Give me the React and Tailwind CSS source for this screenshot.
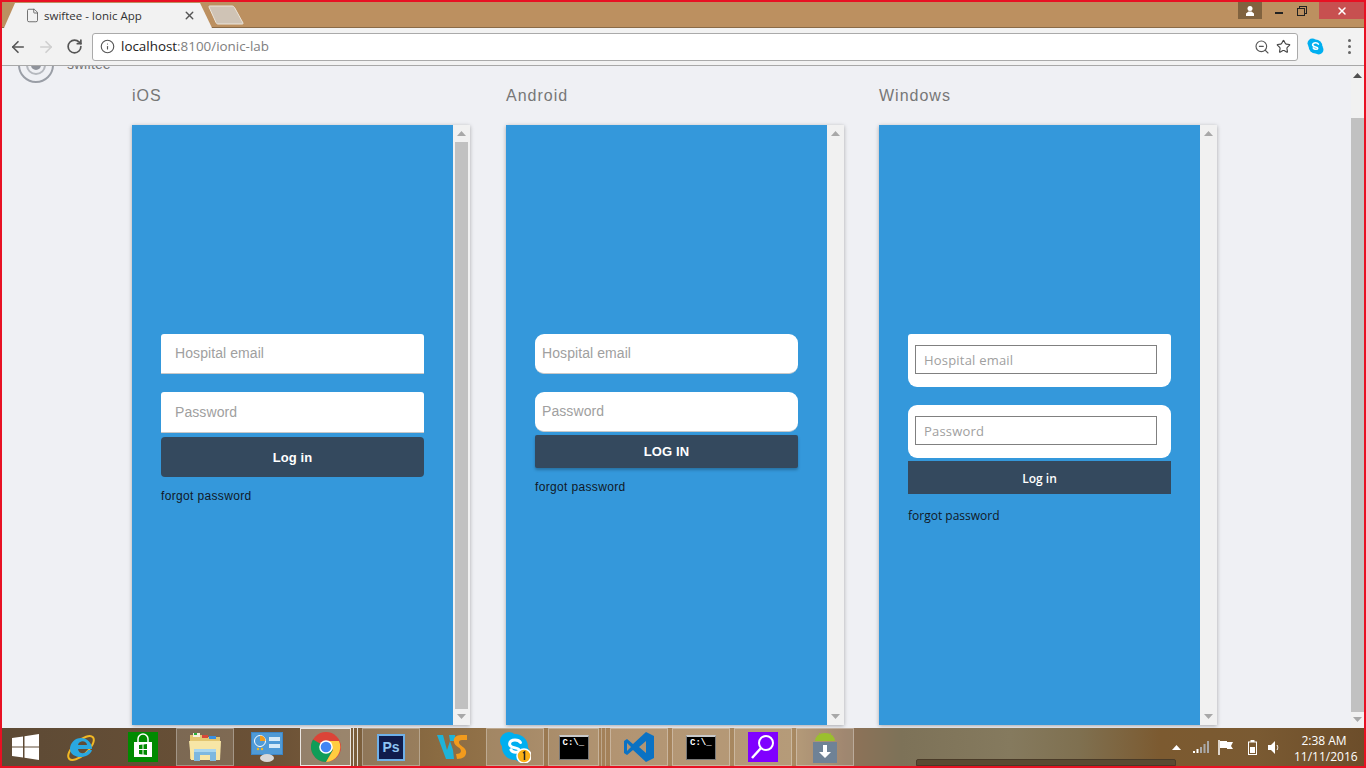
import { ArrowLeft, ArrowRight, RotateCw, Info, ZoomOut, Star, File, X } from "lucide-react";

const chromeFont = "font-['Open_Sans','Noto_Sans',sans-serif]";

function ArrowUp({ className }) {
  return (
    <svg width="9" height="5" viewBox="0 0 9 5" className={className}>
      <path d="M4.5 0L9 5H0z" fill="currentColor" />
    </svg>
  );
}

function ArrowDown({ className }) {
  return (
    <svg width="9" height="5" viewBox="0 0 9 5" className={className}>
      <path d="M0 0h9L4.5 5z" fill="currentColor" />
    </svg>
  );
}

function SkypeIcon({ size = 17, badge = false }) {
  return (
    <svg width={size} height={size} viewBox="0 0 32 32">
      <circle cx="10" cy="10" r="9" fill="#00aff0" />
      <circle cx="22" cy="22" r="9" fill="#00aff0" />
      <circle cx="16" cy="16" r="13" fill="#00aff0" />
      <path d="M21.5 11.5c-1-1.6-3-2.5-5.5-2.5-3.2 0-5.4 1.6-5.4 3.9 0 5 9.6 3 9.6 6.4 0 1.200-1.500 2-3.700 2-2.300 0-3.700-1-4.600-2.500" fill="none" stroke="#fff" strokeWidth="3" strokeLinecap="round" />
      {badge && (
        <>
          <circle cx="25" cy="25" r="7" fill="#fbb017" stroke="#fff" strokeWidth="1.500" />
          <path d="M24 22l1.500-1v8" fill="none" stroke="#222" strokeWidth="1.500" />
        </>
      )}
    </svg>
  );
}

function WinLogo() {
  return (
    <svg width="27" height="26" viewBox="0 0 27 26">
      <path d="M0 4l11-1.600v10H0zM12.500 2.200L27 0v12.400H12.500zM0 13.600h11v10L0 22zM12.500 13.600H27V26l-14.500-2.200z" fill="#fff" />
    </svg>
  );
}

function IeLogo() {
  return (
    <svg width="30" height="31" viewBox="0 0 30 31">
      <ellipse cx="15" cy="16" rx="16" ry="7" transform="rotate(-42 15 16)" fill="none" stroke="#f2b824" strokeWidth="2" />
      <path d="M4 17a11 11 0 1 1 22 0H12c.5 5 7 6 10 1h4c-3 10-22 9-22-1zM12 13h9c-.5-5-8-5-9 0z" fill="#2aa8e0" />
    </svg>
  );
}

function StoreLogo() {
  return (
    <svg width="30" height="30" viewBox="0 0 30 30">
      <rect width="30" height="30" fill="#008a00" />
      <path d="M10 10V7a5 5 0 0 1 10 0v3" fill="none" stroke="#fff" strokeWidth="1.500" />
      <rect x="6" y="10" width="18" height="15" fill="#fff" />
      <path d="M11 13l3.500-.5V17H11zM15.500 12.400L19 12v5h-3.500zM11 18h3.500v4.500L11 22zM15.500 18H19v5l-3.500-.5z" fill="#008a00" />
    </svg>
  );
}

function ExplorerLogo() {
  return (
    <svg width="32" height="30" viewBox="0 0 32 30">
      <path d="M1 3h12l2 2h16v22H1z" fill="#e3c56f" />
      <rect x="4" y="1" width="7" height="4" fill="#f4f0dc" />
      <rect x="5" y="1" width="3" height="2" fill="#27b33c" />
      <rect x="13" y="3" width="6" height="3" fill="#d8473a" />
      <rect x="20" y="4" width="7" height="3" fill="#3a8fe0" />
      <path d="M0 9h32l-1 19H2z" fill="#f7e6a6" />
      <path d="M5 29V18h22v11h-6v-6H11v6z" fill="#7db8e0" />
      <rect x="5" y="17" width="22" height="3" fill="#a8d6f0" />
    </svg>
  );
}

function PanelLogo() {
  return (
    <svg width="32" height="30" viewBox="0 0 32 30">
      <rect x="0" y="0" width="32" height="23" fill="#3d86c6" />
      <rect x="1" y="1" width="30" height="21" fill="#4f9ad6" />
      <circle cx="9" cy="9" r="5.500" fill="none" stroke="#fff" strokeWidth="1" />
      <path d="M9 9V3.500A5.500 5.500 0 0 1 14.500 9z" fill="#f29b1d" />
      <rect x="18" y="5" width="11" height="4" fill="#d6eaf8" />
      <rect x="18" y="12" width="11" height="4" fill="#d6eaf8" />
      <circle cx="7" cy="17" r="1.200" fill="#f2b824" />
      <circle cx="11" cy="17" r="1.200" fill="#f2b824" />
      <ellipse cx="16" cy="26" rx="7" ry="4" fill="#d8d8d8" />
    </svg>
  );
}

function ChromeLogo() {
  return (
    <svg width="30" height="30" viewBox="0 0 30 30">
      <circle cx="15" cy="15" r="15" fill="#db4437" />
      <path d="M15 15L2 7.500A15 15 0 0 0 15 30l7.500-13z" fill="#0f9d58" />
      <path d="M15 9h13a15 15 0 0 1-13 21l7-12z" fill="#ffcd40" />
      <circle cx="15" cy="15" r="6.800" fill="#fff" />
      <circle cx="15" cy="15" r="5.300" fill="#4285f4" />
    </svg>
  );
}

function PsLogo() {
  return (
    <div className="w-[28px] h-[27px] bg-[#101c4c] border-2 border-[#6fb0e8] flex items-center justify-center font-['Liberation_Sans',sans-serif] font-bold text-[14px] leading-none text-[#8ec4f2]">
      Ps
    </div>
  );
}

function WsLogo() {
  return (
    <svg width="32" height="28" viewBox="0 0 32 28">
      <path d="M0 2h6l4 15 3-9 3 9 1 9H9z" fill="#1fb3d8" />
      <path d="M13 8l-1-6h6l1 6z" fill="#1fb3d8" />
      <path d="M20 26c6 0 10-3 9-8-1-4-6-5-7-8-.5-2 1-3 3-3h5V2h-6c-5 0-8 3-7 7 1 5 7 5 7 9 0 2-2 3-5 3z" fill="#f29b1d" />
    </svg>
  );
}

function CmdLogo() {
  return (
    <div className="w-[30px] h-[25px] bg-black border-t-2 border-t-[#c9c9c9] border-x border-b border-[#777] pl-[3px] pt-[2px] font-['Liberation_Mono',monospace] font-bold text-[9px] leading-none text-white whitespace-nowrap">
      C:\_
    </div>
  );
}

function VsLogo() {
  return (
    <svg width="32" height="32" viewBox="0 0 32 32">
      <path d="M23 1l8 4v22l-8 4-13-12-6 5-3-2V10l3-2 6 5zM23 10l-7 6 7 6zM4 12v8l4-4z" fill="#0a72c4" />
    </svg>
  );
}

function SearchLogo() {
  return (
    <svg width="30" height="30" viewBox="0 0 30 30">
      <rect width="30" height="30" fill="#8000ff" />
      <circle cx="18" cy="11" r="7" fill="none" stroke="#fff" strokeWidth="2" />
      <path d="M13 16L4 26" stroke="#fff" strokeWidth="2.500" />
    </svg>
  );
}

function AndroidLogo() {
  return (
    <svg width="24" height="32" viewBox="0 0 24 32">
      <path d="M2 10a10 8 0 0 1 20 0z" fill="#9bbf2e" />
      <path d="M6 2l2 3M18 2l-2 3" stroke="#9bbf2e" />
      <rect y="11" width="24" height="21" fill="#6f8296" />
      <path d="M10 14h4v7h4l-6 6-6-6h4z" fill="#fff" />
    </svg>
  );
}

// pitch of the pinned buttons is 62px, some are open (lit) and some are stacked
const taskItems = [
  { key: "ie", icon: <IeLogo /> },
  { key: "store", icon: <StoreLogo /> },
  { key: "explorer", icon: <ExplorerLogo />, open: true },
  { key: "panel", icon: <PanelLogo /> },
  { key: "chrome", icon: <ChromeLogo />, active: true, stacked: true },
  { key: "ps", icon: <PsLogo />, open: true },
  { key: "ws", icon: <WsLogo /> },
  { key: "skype", icon: <SkypeIcon size={32} badge />, open: true },
  { key: "cmd1", icon: <CmdLogo />, open: true, stacked: true },
  { key: "vs", icon: <VsLogo />, open: true },
  { key: "cmd2", icon: <CmdLogo />, open: true },
  { key: "search", icon: <SearchLogo />, open: true },
  { key: "android", icon: <AndroidLogo />, open: true },
];

function TaskButton({ icon, open, active, stacked }) {
  const lit = active
    ? "bg-white/25 border-white/80"
    : open
      ? "bg-white/15 border-white/30"
      : "border-transparent";
  return (
    <div className="flex shrink-0 mx-[2px] h-full">
      <div className={`${stacked ? "w-[51px]" : "w-[58px]"} h-full border flex items-center justify-center ${lit}`}>
        {icon}
      </div>
      {stacked && (
        <>
          <div className={`w-[3px] h-full border-r ${active ? "border-white/80" : "border-white/30"}`} />
          <div className={`w-[4px] h-full border-r ${active ? "border-white/80" : "border-white/30"}`} />
        </>
      )}
    </div>
  );
}

function Taskbar() {
  return (
    <div className="relative shrink-0 h-[39px] flex items-stretch overflow-hidden bg-[linear-gradient(90deg,#5d4a35_0%,#6b5136_20%,#8a6b42_32%,#a5825a_45%,#a98a62_58%,#8f7258_62%,#7d7258_66%,#857a5e_74%,#7f7050_79%,#7c5a30_85%,#7a5a32_92%,#6c4d2a_100%)] border-b border-[#222]">
      <div className="w-[50px] shrink-0 flex items-center justify-center pl-[1px]">
        <WinLogo />
      </div>
      {taskItems.map(({ key, ...item }) => (
        <TaskButton key={key} {...item} />
      ))}
      <div className="flex-1" />
      <div className="flex items-center pr-[14px] text-white">
        <svg width="9" height="5" viewBox="0 0 9 5"><path d="M4.500 0L9 5H0z" fill="#fff" /></svg>
        <svg width="16" height="12" viewBox="0 0 16 12" className="ml-[12px]">
          <path d="M0 10h2v2H0zM3.500 8h2v4h-2z" fill="#fff" />
          <path d="M7 6h2v6H7zM10.500 3h2v9h-2zM14 0h2v12h-2z" fill="#a9a9a9" />
        </svg>
        <svg width="16" height="15" viewBox="0 0 16 15" className="ml-[9px]">
          <path d="M1 0v15" stroke="#fff" strokeWidth="1.500" />
          <path d="M2 1h7v1h6l-2 4 2 3H9V8H2z" fill="#fff" />
        </svg>
        <svg width="9" height="15" viewBox="0 0 9 15" className="ml-[14px]">
          <rect x=".5" y="2" width="8" height="12.500" fill="none" stroke="#fff" />
          <rect x="2.500" y="0" width="4" height="2" fill="#fff" />
          <rect x="2" y="7" width="5" height="6" fill="#fff" />
        </svg>
        <svg width="12" height="13" viewBox="0 0 12 13" className="ml-[11px]">
          <path d="M0 4h3l4-4v13L3 9H0z" fill="#fff" />
          <path d="M9 4c1 1.500 1 3.500 0 5" fill="none" stroke="#fff" />
        </svg>
        <div className={`${chromeFont} ml-[14px] w-[60px] text-center text-[12px] leading-[16px] text-white mt-[3px] mr-[-2px]`}>
          <div>2:38 AM</div>
          <div>11/11/2016</div>
        </div>
      </div>
      <div className="absolute left-[916px] bottom-0 w-[260px] h-[7px] rounded-t-[2px] bg-[#5a4a32] border border-[#4a3b28]" />
    </div>
  );
}

function TitleBar() {
  return (
    <div className="relative shrink-0 h-[28px] bg-[#bc9060] flex justify-end items-start pt-[2px] pr-[2px] border-b border-[#8a6a46]">
      <svg width="250" height="28" viewBox="0 0 250 28" className="absolute left-0 top-0">
        <path d="M4 28L15 3h185l12 25z" fill="#f2f2f2" />
        <path d="M210 6h22c1 0 2 .5 2.500 1.500L243 23c.3.600 0 1-1 1h-24c-1 0-1.500-.5-2-1.500L209 7c-.3-.5 0-1 1-1z" fill="#cfc3b5" stroke="#ece5da" />
      </svg>
      <div className={`${chromeFont} absolute left-[25px] top-[8px] w-[172px] flex items-center text-[11.5px] leading-[14px] text-[#333]`}>
        <File size={15} strokeWidth={1.3} className="text-[#555]" />
        <span className="ml-[4px] flex-1">swiftee - Ionic App</span>
        <X size={13} strokeWidth={2.5} className="text-[#555] mr-[1px]" />
      </div>
      <div className="w-[24px] h-[17px] bg-[#80623f] flex items-center justify-center">
        <svg width="10" height="10" viewBox="0 0 10 10"><circle cx="5" cy="2.500" r="2.500" fill="#fff" /><path d="M1 10V7.500L3.500 5.500h3L9 7.500V10z" fill="#fff" /></svg>
      </div>
      <div className="w-[57px] h-[17px] flex items-center justify-between px-[13px]">
        <div className="w-[8px] h-[2px] bg-[#222] mt-[5px]" />
        <svg width="10" height="10" viewBox="0 0 10 10" className="shrink-0 -mr-[1px]">
          <rect x="2.500" y=".5" width="7" height="7" fill="none" stroke="#222" />
          <rect x=".5" y="2.500" width="7" height="7" fill="#bc9060" stroke="#222" />
        </svg>
      </div>
      <div className="w-[45px] h-[17px] bg-[#c75050] flex items-center justify-center">
        <X size={12} strokeWidth={3} className="text-white" />
      </div>
    </div>
  );
}

function Toolbar() {
  return (
    <div className="shrink-0 h-[38px] bg-[#f2f2f2] border-b border-[#a8a8a8] flex items-center pl-[9px] pr-[10px]">
      <ArrowLeft size={18} strokeWidth={2.2} className="text-[#555]" />
      <ArrowRight size={18} strokeWidth={2.2} className="ml-[10px] text-[#cfcfcf]" />
      <RotateCw size={17} strokeWidth={2.4} className="ml-[11px] text-[#555]" />
      <div className="ml-[9px] w-[1206px] h-[28px] bg-white border border-[#aaa] rounded-[3px] flex items-center pl-[7px] pr-[6px]">
        <Info size={15} strokeWidth={1.8} className="text-[#555]" />
        <span className={`${chromeFont} ml-[6px] text-[13.4px] text-[#222] flex-1`}>
          localhost<span className="text-[#808080]">:8100/ionic-lab</span>
        </span>
        <ZoomOut size={16} strokeWidth={1.7} className="text-[#555]" />
        <Star size={15} strokeWidth={1.8} className="ml-[6px] text-[#444]" />
      </div>
      <div className="ml-[9px]">
        <SkypeIcon />
      </div>
      <div className="ml-[24px] flex flex-col gap-[3px]">
        <div className="w-[3px] h-[3px] rounded-full bg-[#666]" />
        <div className="w-[3px] h-[3px] rounded-full bg-[#666]" />
        <div className="w-[3px] h-[3px] rounded-full bg-[#666]" />
      </div>
    </div>
  );
}

function PhoneScrollbar({ thumb }) {
  return (
    <div className="w-[17px] h-full bg-[#f1f1f1] flex flex-col items-center">
      <ArrowUp className="mt-[6px] text-[#a8a8a8]" />
      <div className="flex-1 w-[13px] mt-[6px] mb-[5px]">
        {thumb && <div className="w-full h-full bg-[#c1c1c1]" />}
      </div>
      <ArrowDown className="mb-[6px] text-[#a8a8a8]" />
    </div>
  );
}

function Phone({ title, thumb, className = "", children }) {
  return (
    <div className={`w-[338px] shrink-0 ${className}`}>
      <h2 className="h-[20px] mt-[1px] mb-[19px] font-['Liberation_Sans',sans-serif] text-[16px] leading-[20px] tracking-[1px] text-[#777]">
        {title}
      </h2>
      <div className="h-[600px] flex shadow-[0_1px_4px_rgba(0,0,0,0.3)]">
        <div className="w-[321px] h-full bg-[#3498db] px-[29px] pt-[209px]">{children}</div>
        <PhoneScrollbar thumb={thumb} />
      </div>
    </div>
  );
}

function IosForm() {
  return (
    <div className="font-['Liberation_Sans',sans-serif]">
      <div className="h-[40px] bg-white rounded-t-[3px] border-b border-[#c8c8c8] flex items-center">
        <input placeholder="Hospital email" className="w-full pl-[14px] text-[14px] tracking-[0.08px] outline-none bg-transparent placeholder:text-[#a0a0a0]" />
      </div>
      <div className="mt-[18px] h-[41px] bg-white rounded-t-[3px] border-b border-[#c8c8c8] flex items-center">
        <input placeholder="Password" className="w-full pl-[14px] text-[14px] tracking-[0.08px] outline-none bg-transparent placeholder:text-[#a0a0a0]" />
      </div>
      <button className="mt-[4px] pt-[1px] block w-full h-[40px] rounded-[4px] bg-[#34495e] text-white text-[13px] tracking-[0.1px] font-bold">Log in</button>
      <p className="mt-[11px] text-[12px] leading-[16px] tracking-[0.35px] text-[#111827]">forgot password</p>
    </div>
  );
}

function AndroidForm() {
  return (
    <div className="font-['Liberation_Sans',sans-serif]">
      <div className="h-[40px] bg-white rounded-[9px] border-b border-[#c8c8c8] flex items-center">
        <input placeholder="Hospital email" className="w-full pl-[7px] text-[14px] tracking-[0.08px] outline-none bg-transparent placeholder:text-[#a0a0a0]" />
      </div>
      <div className="mt-[18px] h-[40px] bg-white rounded-[9px] border-b border-[#c8c8c8] flex items-center">
        <input placeholder="Password" className="w-full pl-[7px] text-[14px] tracking-[0.08px] outline-none bg-transparent placeholder:text-[#a0a0a0]" />
      </div>
      <button className="mt-[3px] block w-full h-[33px] rounded-[2px] bg-[#34495e] text-white text-[13px] tracking-[0.1px] font-bold shadow-[0_2px_3px_rgba(0,0,0,0.25)]">LOG IN</button>
      <p className="mt-[11px] text-[12px] leading-[16px] tracking-[0.35px] text-[#111827]">forgot password</p>
    </div>
  );
}

function WindowsForm() {
  return (
    <div className="font-['Open_Sans','Noto_Sans',sans-serif]">
      <div className="h-[53px] bg-white rounded-b-[9px] rounded-t-[3px] pt-[11px] px-[7px]">
        <input placeholder="Hospital email" className="w-[242px] h-[29px] border border-[#808080] pl-[8px] text-[13px] tracking-[0.2px] outline-none placeholder:text-[#a0a0a0]" />
      </div>
      <div className="mt-[18px] h-[53px] bg-white rounded-[9px] pt-[11px] px-[7px]">
        <input placeholder="Password" className="w-[242px] h-[29px] border border-[#808080] pl-[8px] text-[13px] tracking-[0.2px] outline-none placeholder:text-[#a0a0a0]" />
      </div>
      <button className="mt-[3px] pt-[2px] block w-full h-[33px] bg-[#34495e] text-white text-[12px] font-semibold">Log in</button>
      <p className="mt-[14px] text-[12px] leading-[16px] text-[#111827]">forgot password</p>
    </div>
  );
}

function Content() {
  return (
    <div className="flex-1 min-h-0 flex bg-[#eff0f4]">
      <div className="flex-1 min-w-0 overflow-hidden">
        <div className="-mt-[19px]">
          <div className="h-[38px] pl-[18px] flex items-start">
            <div className="w-[36px] h-[36px] rounded-full border-2 border-[#9a9ea6] flex items-center justify-center">
              <div className="w-[20px] h-[20px] rounded-full border-2 border-[#b5b8be] flex items-center justify-center">
                <div className="w-[10px] h-[10px] rounded-full bg-[#8f939b]" />
              </div>
            </div>
            <span className="ml-[13px] mt-[9px] font-['Liberation_Sans',sans-serif] text-[14px] leading-[16px] text-[#777]">swiftee</span>
          </div>
          <div className="pl-[132px] flex gap-[36px]">
            <Phone title="iOS" thumb><IosForm /></Phone>
            <Phone title="Android"><AndroidForm /></Phone>
            <Phone title="Windows" className="-ml-[1px]"><WindowsForm /></Phone>
          </div>
        </div>
      </div>
      <div className="w-[15px] shrink-0 bg-[#f1f1f1] flex flex-col items-center pr-[2px]">
        <ArrowUp className="mt-[7px] text-[#505050]" />
        <div className="w-[13px] mt-[40px] flex-1 bg-[#c1c1c1]" />
        <ArrowDown className="mt-[5px] mb-[6px] text-[#a8a8a8]" />
      </div>
    </div>
  );
}

export default function App() {
  return (
    <div className={`relative w-[1366px] h-[768px] overflow-hidden flex flex-col pb-[1px] bg-[#bc9060] ${chromeFont}`}>
      <TitleBar />
      <Toolbar />
      <Content />
      <Taskbar />
      <div className="absolute inset-0 border-2 border-[#e81123] pointer-events-none" />
    </div>
  );
}
